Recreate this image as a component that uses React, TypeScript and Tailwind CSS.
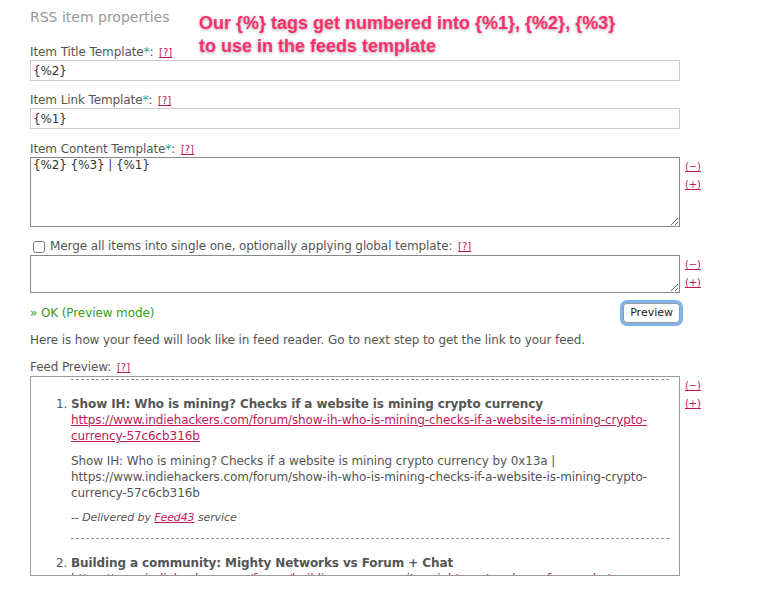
import React from 'react';

const font = 'font-["DejaVu_Sans",Verdana,sans-serif]';

function Help() {
  return <a className="text-[10px] text-[#c2185b] underline ml-[2px] align-baseline tracking-normal">[?]</a>;
}

function Req() {
  return <span className="text-[#2aa198]">*</span>;
}

function SizeLinks() {
  return (
    <div className="flex flex-col gap-[2px] pt-[2px] pl-[5px] text-[10px] leading-[16px] text-[#c2185b]">
      <a className="underline">(−)</a>
      <a className="underline">(+)</a>
    </div>
  );
}

export default function App() {
  return (
    <div className={`${font} w-[761px] h-[595px] overflow-hidden bg-white text-[#555] text-[12px] tracking-[-0.1px] relative`}>
      {/* annotation overlay */}
      <div className="absolute left-[199px] top-[12px] font-['Liberation_Sans',Arial,sans-serif] font-bold text-[18px] leading-[23px] tracking-normal text-[#ff2f6e] [text-shadow:0_1px_3px_rgba(0,0,0,0.35)]">
        <div>Our {'{%}'} tags get numbered into {'{%1}'}, {'{%2}'}, {'{%3}'}</div>
        <div>to use in the feeds template</div>
      </div>

      <div className="pl-[30px] pt-[8px]">
        <div className="text-[14px] text-[#999] leading-[18px] tracking-normal">RSS item properties</div>

        <div className="mt-[19px] leading-[15px]">Item Title Template<Req />: <Help /></div>
        <input readOnly value="{%2}" className="block w-[650px] h-[21px] border border-[#ccc] px-[2px] text-[12px] text-[#333] outline-none" />

        <div className="mt-[12px] leading-[15px]">Item Link Template<Req />: <Help /></div>
        <input readOnly value="{%1}" className="block w-[650px] h-[21px] border border-[#ccc] px-[2px] text-[12px] text-[#333] outline-none" />

        <div className="mt-[13px] leading-[15px]">Item Content Template<Req />: <Help /></div>
        <div className="flex">
          <textarea readOnly value="{%2} {%3} | {%1}" className="block w-[650px] h-[70px] border border-[#888] px-[2px] text-[12px] text-[#333] leading-[15px] outline-none resize-y" />
          <SizeLinks />
        </div>

        <label className="flex items-center mt-[11px] leading-[16px]">
          <input type="checkbox" className="w-[12px] h-[12px] ml-[3px] mr-[5px]" />
          <span>Merge all items into single one, optionally applying global template: <Help /></span>
        </label>
        <div className="flex">
          <textarea readOnly className="block w-[650px] h-[38px] border border-[#888] px-[2px] text-[12px] outline-none" />
          <SizeLinks />
        </div>

        <div className="flex items-center w-[650px] mt-[10px]">
          <span className="text-[#3a9a1a] flex-1">» OK (Preview mode)</span>
          <button className="h-[20px] px-[6px] text-[11px] text-[#222] bg-white border border-[#999] rounded-[4px] ring-[3px] ring-[#80b3f0] tracking-normal">Preview</button>
        </div>

        <div className="mt-[9px] leading-[16px]">Here is how your feed will look like in feed reader. Go to next step to get the link to your feed.</div>

        <div className="mt-[11px] leading-[16px]">Feed Preview: <Help /></div>
        <div className="flex">
          <div className="w-[650px] h-[200px] border border-[#999] overflow-hidden pr-[10px]">
            <ol className="list-decimal pl-[40px] mt-[2px]">
              <li className="border-t border-dashed border-[#999] pt-[15px] pb-[12px]">
                <div className="font-bold leading-[16px]">Show IH: Who is mining? Checks if a website is mining crypto currency</div>
                <a className="text-[#c2185b] underline leading-[16px] block">https://www.indiehackers.com/forum/show-ih-who-is-mining-checks-if-a-website-is-mining-crypto-currency-57c6cb316b</a>
                <p className="mt-[9px] leading-[16px]">Show IH: Who is mining? Checks if a website is mining crypto currency by 0x13a | https://www.indiehackers.com/forum/show-ih-who-is-mining-checks-if-a-website-is-mining-crypto-currency-57c6cb316b</p>
                <p className="mt-[9px] text-[11px] italic leading-[16px]">-- Delivered by <a className="text-[#c2185b] underline">Feed43</a> service</p>
              </li>
              <li className="border-t border-dashed border-[#999] pt-[15px]">
                <div className="font-bold leading-[16px]">Building a community: Mighty Networks vs Forum + Chat</div>
                <a className="text-[#c2185b] underline leading-[16px] block">https://www.indiehackers.com/forum/building-a-community-mighty-networks-vs-forum-chat</a>
              </li>
            </ol>
          </div>
          <SizeLinks />
        </div>
      </div>
    </div>
  );
}
